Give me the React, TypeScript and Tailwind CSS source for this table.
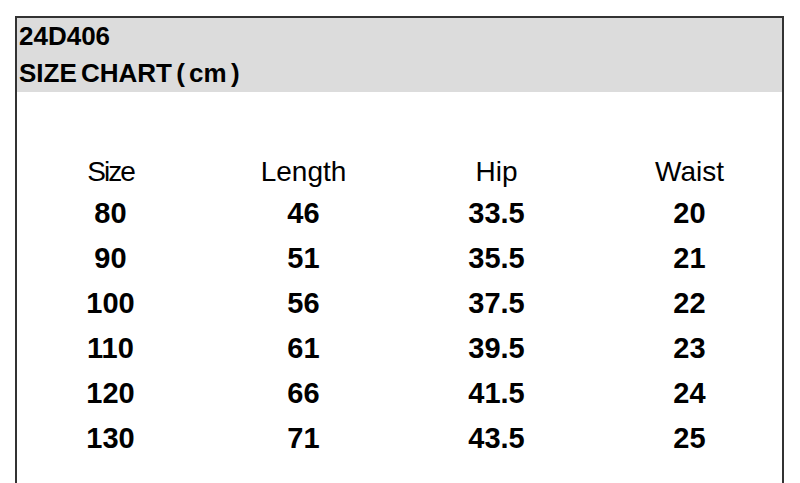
import React from "react";

const rows = [
  ["80", "46", "33.5", "20"],
  ["90", "51", "35.5", "21"],
  ["100", "56", "37.5", "22"],
  ["110", "61", "39.5", "23"],
  ["120", "66", "41.5", "24"],
  ["130", "71", "43.5", "25"],
];

const heads = ["Size", "Length", "Hip", "Waist"];

export default function App() {
  return (
    <div className="w-[800px] h-[483px] bg-white overflow-hidden pt-[16px] pl-[15px] font-['Liberation_Sans',Arial,sans-serif] text-black">
      <div className="w-[769px] h-[480px] border-t-2 border-l-2 border-r-2 border-[#333]">
        <div className="h-[74px] bg-[#dcdcdc] pl-[2px] pt-0 font-bold text-[26px] leading-[37px]">
          <div>24D406</div>
          <div className="[word-spacing:-3px]">SIZE CHART ( cm )</div>
        </div>
        <div className="grid grid-cols-[repeat(4,193px)] -ml-[3px] pt-[61px]">
          {heads.map((h) => (
            <div key={h} className={`text-center text-[28px] leading-[38px] ${h === "Size" ? "tracking-[-2px]" : ""}`}>
              {h}
            </div>
          ))}
          {rows.map((r) =>
            r.map((v, i) => (
              <div key={r[0] + i} className="text-center font-bold text-[29px] leading-[45px]">
                {v}
              </div>
            ))
          )}
        </div>
      </div>
    </div>
  );
}
